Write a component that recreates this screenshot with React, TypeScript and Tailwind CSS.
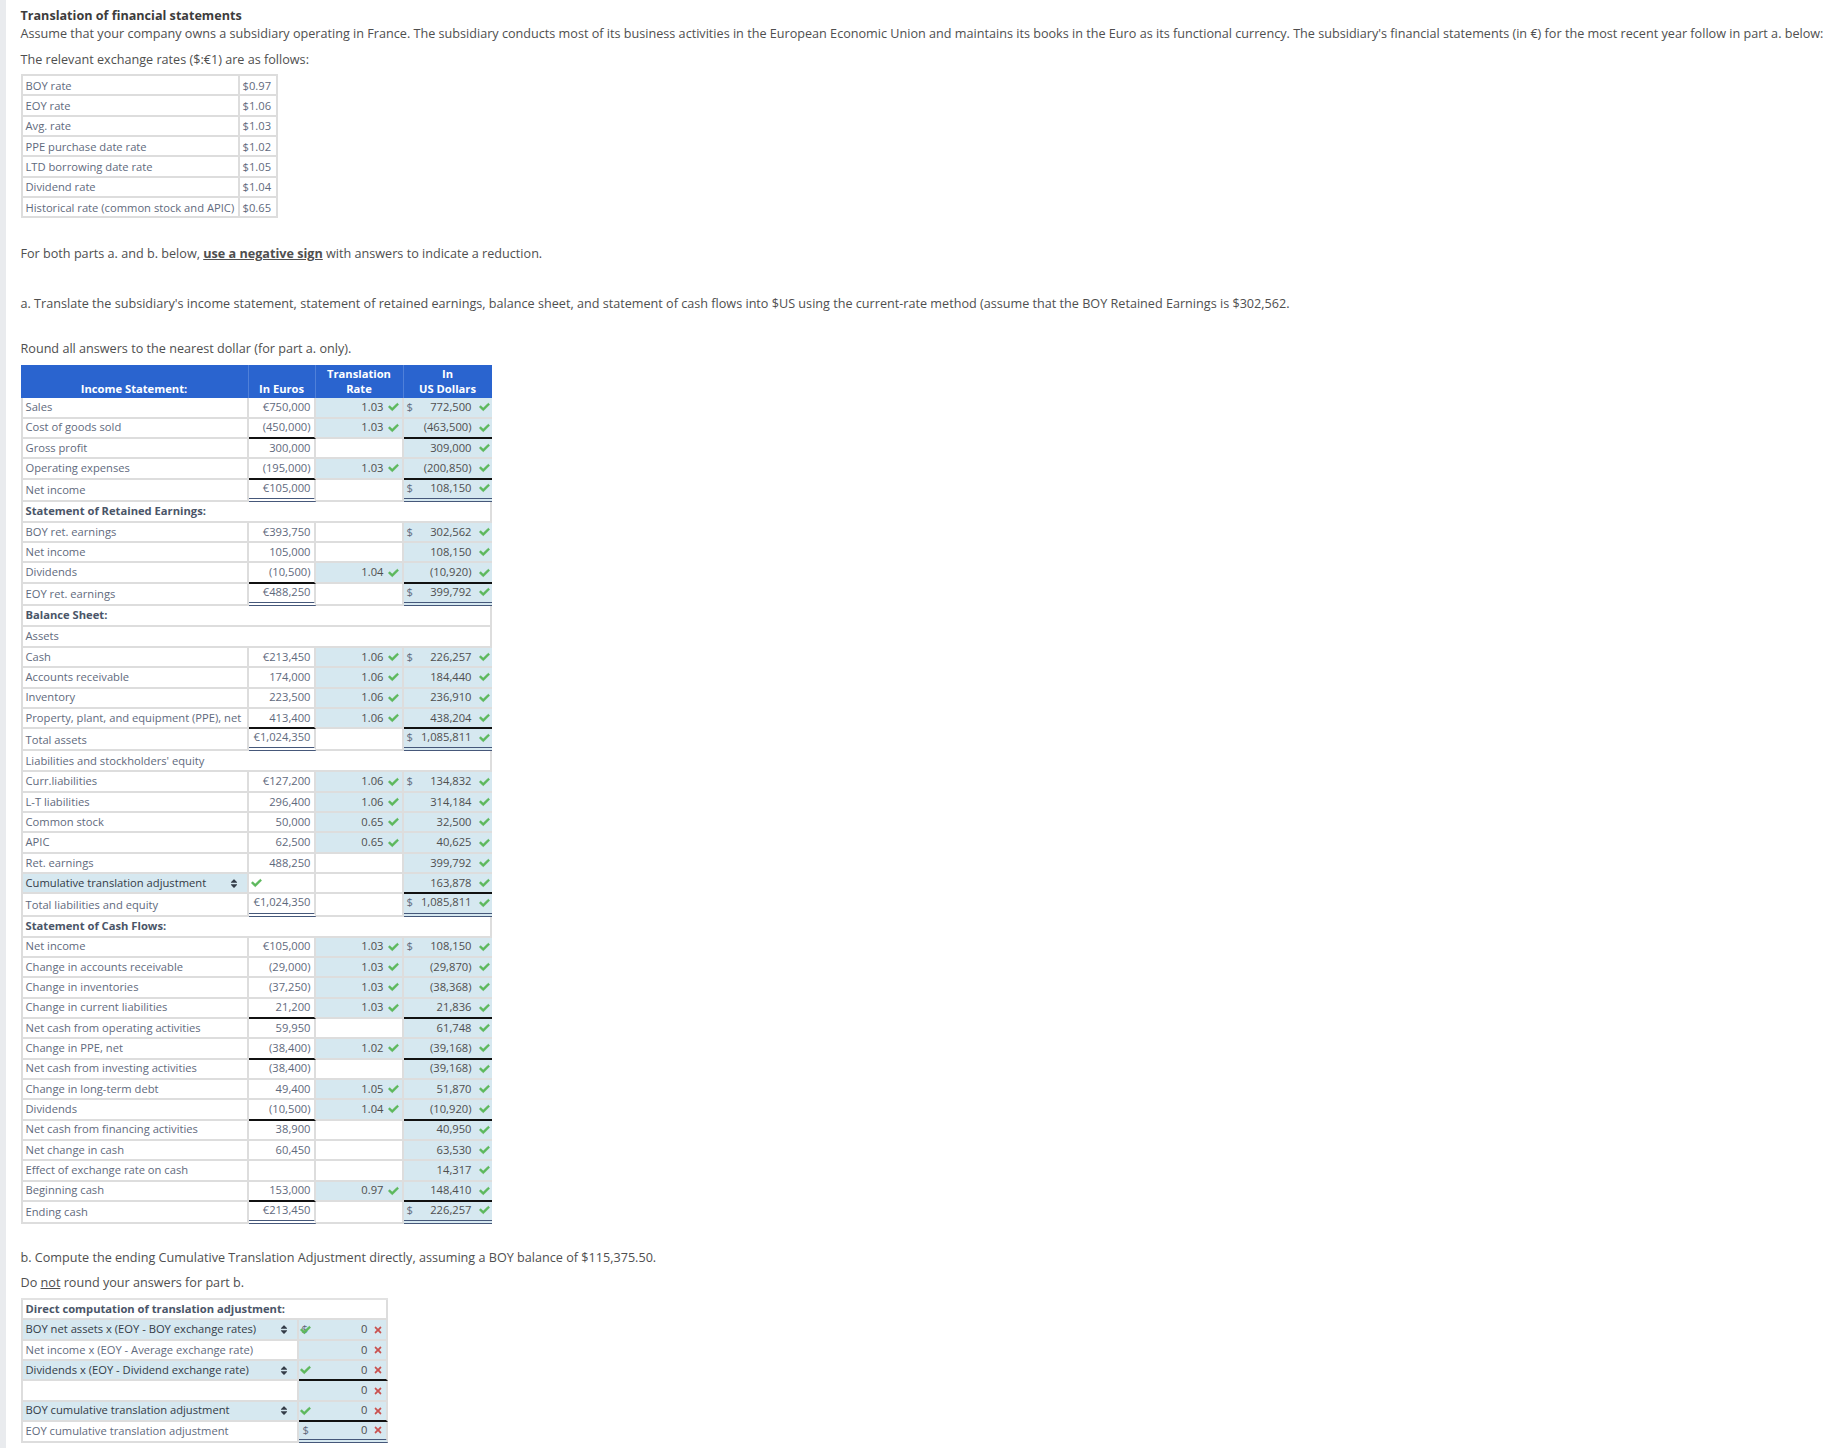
import { FaCheck, FaSort, FaTimes } from 'react-icons/fa'

type Row = {
  label: string
  kind?: 'normal' | 'total' | 'section'
  bold?: boolean
  select?: boolean
  euro?: string
  rate?: string
  dollar?: boolean
  usd?: string
  line?: boolean // black rule under the numbers of this row
  lineUsdOnly?: boolean
  euroCheck?: boolean
}

const rates = [
  ['BOY rate', '$0.97'],
  ['EOY rate', '$1.06'],
  ['Avg. rate', '$1.03'],
  ['PPE purchase date rate', '$1.02'],
  ['LTD borrowing date rate', '$1.05'],
  ['Dividend rate', '$1.04'],
  ['Historical rate (common stock and APIC)', '$0.65'],
]

const rows: Row[] = [
  { label: 'Sales', euro: '€750,000', rate: '1.03', dollar: true, usd: '772,500' },
  { label: 'Cost of goods sold', euro: '(450,000)', rate: '1.03', usd: '(463,500)', line: true },
  { label: 'Gross profit', euro: '300,000', usd: '309,000' },
  { label: 'Operating expenses', euro: '(195,000)', rate: '1.03', usd: '(200,850)', line: true },
  { label: 'Net income', kind: 'total', euro: '€105,000', dollar: true, usd: '108,150' },
  { label: 'Statement of Retained Earnings:', kind: 'section', bold: true },
  { label: 'BOY ret. earnings', euro: '€393,750', dollar: true, usd: '302,562' },
  { label: 'Net income', euro: '105,000', usd: '108,150' },
  { label: 'Dividends', euro: '(10,500)', rate: '1.04', usd: '(10,920)', line: true },
  { label: 'EOY ret. earnings', kind: 'total', euro: '€488,250', dollar: true, usd: '399,792' },
  { label: 'Balance Sheet:', kind: 'section', bold: true },
  { label: 'Assets', kind: 'section' },
  { label: 'Cash', euro: '€213,450', rate: '1.06', dollar: true, usd: '226,257' },
  { label: 'Accounts receivable', euro: '174,000', rate: '1.06', usd: '184,440' },
  { label: 'Inventory', euro: '223,500', rate: '1.06', usd: '236,910' },
  { label: 'Property, plant, and equipment (PPE), net', euro: '413,400', rate: '1.06', usd: '438,204', line: true },
  { label: 'Total assets', kind: 'total', euro: '€1,024,350', dollar: true, usd: '1,085,811' },
  { label: "Liabilities and stockholders' equity", kind: 'section' },
  { label: 'Curr.liabilities', euro: '€127,200', rate: '1.06', dollar: true, usd: '134,832' },
  { label: 'L-T liabilities', euro: '296,400', rate: '1.06', usd: '314,184' },
  { label: 'Common stock', euro: '50,000', rate: '0.65', usd: '32,500' },
  { label: 'APIC', euro: '62,500', rate: '0.65', usd: '40,625' },
  { label: 'Ret. earnings', euro: '488,250', usd: '399,792' },
  { label: 'Cumulative translation adjustment', select: true, euroCheck: true, usd: '163,878', lineUsdOnly: true },
  { label: 'Total liabilities and equity', kind: 'total', euro: '€1,024,350', dollar: true, usd: '1,085,811' },
  { label: 'Statement of Cash Flows:', kind: 'section', bold: true },
  { label: 'Net income', euro: '€105,000', rate: '1.03', dollar: true, usd: '108,150' },
  { label: 'Change in accounts receivable', euro: '(29,000)', rate: '1.03', usd: '(29,870)' },
  { label: 'Change in inventories', euro: '(37,250)', rate: '1.03', usd: '(38,368)' },
  { label: 'Change in current liabilities', euro: '21,200', rate: '1.03', usd: '21,836', line: true },
  { label: 'Net cash from operating activities', euro: '59,950', usd: '61,748' },
  { label: 'Change in PPE, net', euro: '(38,400)', rate: '1.02', usd: '(39,168)', line: true },
  { label: 'Net cash from investing activities', euro: '(38,400)', usd: '(39,168)' },
  { label: 'Change in long-term debt', euro: '49,400', rate: '1.05', usd: '51,870' },
  { label: 'Dividends', euro: '(10,500)', rate: '1.04', usd: '(10,920)', line: true },
  { label: 'Net cash from financing activities', euro: '38,900', usd: '40,950' },
  { label: 'Net change in cash', euro: '60,450', usd: '63,530' },
  { label: 'Effect of exchange rate on cash', usd: '14,317' },
  { label: 'Beginning cash', euro: '153,000', rate: '0.97', usd: '148,410', line: true },
  { label: 'Ending cash', kind: 'total', euro: '€213,450', dollar: true, usd: '226,257' },
]

const direct = [
  { label: 'BOY net assets x (EOY - BOY exchange rates)', select: true, mark: 'both' },
  { label: 'Net income x (EOY - Average exchange rate)' },
  { label: 'Dividends x (EOY - Dividend exchange rate)', select: true, mark: 'check', line: true },
  { label: '' },
  { label: 'BOY cumulative translation adjustment', select: true, mark: 'check', line: true },
  { label: 'EOY cumulative translation adjustment', mark: 'dollar', total: true },
]

const doubleRule = 'border-b-[4px] [border-bottom-style:double] border-b-[#46587a]'
const blackRule = 'border-b-2 border-b-[#111111]'
const greyRule = 'border-b-2 border-b-[#dddddd]'

function Check({ className = '' }: { className?: string }) {
  return <FaCheck className={`w-[11px] h-[10px] shrink-0 text-[#5cb85c] stroke-current stroke-[30] ${className}`} />
}

export default function App() {
  return (
    <div className="flex min-h-[1448px] w-[1828px] overflow-hidden bg-white font-['Open_Sans',sans-serif] text-[12.63px] text-[#4f4f4f]">
      <div className="w-[6px] shrink-0 bg-[#e9ebee]" />
      <main className="pl-[14.5px] pt-[6px] whitespace-nowrap">
        <h1 className="h-[19px] text-[12.6px] leading-[19px] font-bold text-[#3c3c3c]">Translation of financial statements</h1>
        <p className="h-[18px] leading-[18px]">
          Assume that your company owns a subsidiary operating in France. The subsidiary conducts most of its business activities in the European Economic Union and maintains its books in the Euro as its functional currency. The subsidiary's financial statements (in €) for the most recent year follow in part a. below:
        </p>
        <p className="mt-[8px] h-[18px] leading-[18px]">The relevant exchange rates ($:€1) are as follows:</p>

        <table className="mt-[5px] table-fixed w-[255px] border-separate border-spacing-0 text-[11.2px] text-[#5f6a7d] border-t-2 border-l-2 border-[#dddddd]">
          <colgroup>
            <col className="w-[217px]" />
            <col className="w-[38px]" />
          </colgroup>
          <tbody>
            {rates.map(([name, value]) => (
              <tr key={name} className="h-[20.33px]">
                <td className="px-[3px] py-0 border-r-2 border-b-2 border-[#dddddd] leading-none">{name}</td>
                <td className="px-[3px] py-0 border-r-2 border-b-2 border-[#dddddd] leading-none">{value}</td>
              </tr>
            ))}
          </tbody>
        </table>

        <p className="mt-[27px] h-[18px] leading-[18px]">
          For both parts a. and b. below, <span className="font-bold underline">use a negative sign</span> with answers to indicate a reduction.
        </p>
        <p className="mt-[32px] h-[18px] leading-[18px]">
          a. Translate the subsidiary's income statement, statement of retained earnings, balance sheet, and statement of cash flows into $US using the current-rate method (assume that the BOY Retained Earnings is $302,562.
        </p>
        <p className="mt-[27px] h-[18px] leading-[18px]">Round all answers to the nearest dollar (for part a. only).</p>

        {/* Main translation worksheet */}
        <table className="mt-[7px] table-fixed w-[471px] border-separate border-spacing-0 text-[11.2px] text-[#5f6a7d]">
          <colgroup>
            <col className="w-[228px]" />
            <col className="w-[67px]" />
            <col className="w-[88px]" />
            <col className="w-[88px]" />
          </colgroup>
          <thead>
            <tr className="h-[33px] bg-[#2a64cf] text-white text-[11.2px] font-bold leading-[15px] text-center">
              <th className="align-bottom pb-[2px] border-r border-[#4f80d9]">Income Statement:</th>
              <th className="align-bottom pb-[2px] border-r border-[#4f80d9]">In Euros</th>
              <th className="align-bottom pb-[2px] border-r border-[#4f80d9]">Translation<br />Rate</th>
              <th className="align-bottom pb-[2px]">In<br />US Dollars</th>
            </tr>
          </thead>
          <tbody>
            {rows.map((row, i) => (
              <WorkRow key={i} row={row} />
            ))}
          </tbody>
        </table>

        <p className="mt-[25px] h-[18px] leading-[18px]">
          b. Compute the ending Cumulative Translation Adjustment directly, assuming a BOY balance of $115,375.50.
        </p>
        <p className="mt-[7px] h-[18px] leading-[18px]">
          Do <span className="underline">not</span> round your answers for part b.
        </p>

        {/* Direct computation */}
        <table className="mt-[6px] table-fixed w-[367px] border-separate border-spacing-0 text-[11.2px] text-[#5f6a7d] border-t-2 border-[#e2e2e2]">
          <colgroup>
            <col className="w-[278px]" />
            <col className="w-[89px]" />
          </colgroup>
          <tbody>
            <tr className="h-[20.33px]">
              <td colSpan={2} className="px-[3px] border-l-2 border-r-2 border-b-2 border-[#dddddd] font-bold text-[#4a5568]">
                Direct computation of translation adjustment:
              </td>
            </tr>
            {direct.map((row, i) => (
              <tr key={i} className="h-[20.33px]">
                <td className={`px-[3px] border-l-2 border-r-2 border-b-2 border-[#dddddd] ${row.select ? 'bg-[#d6e8f0] text-[#333b47]' : ''}`}>
                  <div className="flex items-center justify-between pr-[5px]">
                    <span>{row.label}</span>
                    {row.select && <FaSort className="w-[10px] h-[11px] text-[#333b47]" />}
                  </div>
                </td>
                <td className={`bg-[#d6e8f0] border-r-2 border-r-[#dddddd] ${row.total ? doubleRule : row.line ? blackRule : greyRule}`}>
                  <div className="relative flex items-center justify-end gap-[5px] pr-[3px] text-[#4f4f4f]">
                    {row.mark === 'dollar' && <span className="absolute left-[4px] text-[#5f6a7d]">$</span>}
                    {row.mark === 'both' && <span className="absolute left-[3px] text-[#5f6a7d]">$</span>}
                    {(row.mark === 'check' || row.mark === 'both') && <Check className="absolute left-[1px]" />}
                    <span>0</span>
                    <FaTimes className="w-[10px] h-[10px] text-[#c9514f]" />
                  </div>
                </td>
              </tr>
            ))}
          </tbody>
        </table>
      </main>
    </div>
  )
}

function WorkRow({ row }: { row: Row }) {
  const edge = 'border-r-2 border-r-[#dddddd] p-0'
  const height = row.kind === 'total' ? 'h-[22.2px]' : row.kind === 'section' ? 'h-[21px]' : 'h-[20.33px]'

  if (row.kind === 'section') {
    return (
      <tr className={height}>
        <td colSpan={4} className={`${edge} ${greyRule} border-l-2 border-l-[#dddddd] px-[3px] ${row.bold ? 'font-bold text-[#4a5568]' : ''}`}>
          {row.label}
        </td>
      </tr>
    )
  }

  const isTotal = row.kind === 'total'
  const rule = isTotal ? doubleRule : row.line ? blackRule : greyRule

  return (
    <tr className={height}>
      <td className={`${edge} ${greyRule} border-l-2 border-l-[#dddddd] px-[3px] ${isTotal ? 'align-bottom pb-[1px]' : ''} ${row.select ? 'bg-[#d6e8f0] text-[#333b47]' : ''}`}>
        <div className="flex items-center justify-between pr-[5px]">
          <span>{row.label}</span>
          {row.select && <FaSort className="w-[10px] h-[11px]" />}
        </div>
      </td>
      <td className={`${edge} text-right pr-[3px] ${row.euroCheck ? greyRule : rule} ${isTotal ? 'align-top' : ''}`}>
        {row.euroCheck ? <Check className="ml-[2px]" /> : row.euro}
      </td>
      <td className={`${edge} ${greyRule} ${row.rate ? 'bg-[#d6e8f0]' : ''}`}>
        {row.rate && (
          <div className="flex items-center justify-end gap-[4px] pr-[3px] text-[#4f4f4f]">
            <span>{row.rate}</span>
            <Check />
          </div>
        )}
      </td>
      <td className={`bg-[#d6e8f0] p-0 ${row.lineUsdOnly ? blackRule : rule} ${isTotal ? 'align-top' : ''}`}>
        <div className="relative flex items-center justify-end gap-[7px] pr-[2px] text-[#4f4f4f]">
          {row.dollar && <span className="absolute left-[3px] text-[#5f6a7d]">$</span>}
          <span>{row.usd}</span>
          <Check />
        </div>
      </td>
    </tr>
  )
}
